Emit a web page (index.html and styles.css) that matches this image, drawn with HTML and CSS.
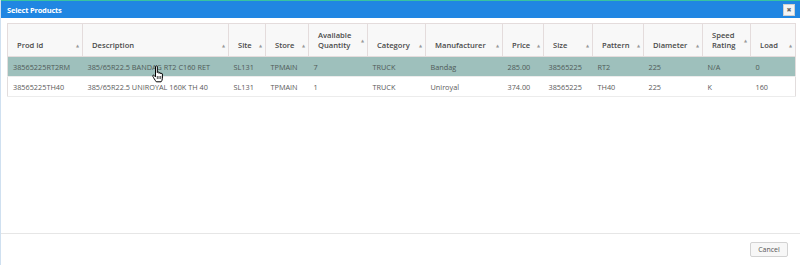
FILE: index.html
```html
<!DOCTYPE html>
<html lang="en">
<head>
    <meta charset="UTF-8">
    <title>Select Products</title>
    <link rel="stylesheet" href="styles.css">
</head>
<body>
    <div class="dialog">
        <div class="titlebar">
            <span class="title">Select Products</span>
            <span class="close">&#10006;</span>
        </div>
        <div class="content">
            <table class="grid">
                <colgroup>
                    <col style="width: 75px">
                    <col style="width: 146px">
                    <col style="width: 37px">
                    <col style="width: 43px">
                    <col style="width: 59px">
                    <col style="width: 58px">
                    <col style="width: 77px">
                    <col style="width: 41px">
                    <col style="width: 49px">
                    <col style="width: 51px">
                    <col style="width: 59px">
                    <col style="width: 48px">
                    <col style="width: 45px">
                </colgroup>
                <thead>
                    <tr>
                        <th><div class="th">Prod Id<span class="sort">&#9650;</span></div></th>
                        <th><div class="th">Description<span class="sort">&#9650;</span></div></th>
                        <th><div class="th">Site<span class="sort">&#9650;</span></div></th>
                        <th><div class="th">Store<span class="sort">&#9650;</span></div></th>
                        <th><div class="th">Available<br>Quantity<span class="sort">&#9650;</span></div></th>
                        <th><div class="th">Category<span class="sort">&#9650;</span></div></th>
                        <th><div class="th">Manufacturer<span class="sort">&#9650;</span></div></th>
                        <th><div class="th">Price<span class="sort">&#9650;</span></div></th>
                        <th><div class="th">Size<span class="sort">&#9650;</span></div></th>
                        <th><div class="th">Pattern<span class="sort">&#9650;</span></div></th>
                        <th><div class="th">Diameter<span class="sort">&#9650;</span></div></th>
                        <th><div class="th">Speed<br>Rating<span class="sort">&#9650;</span></div></th>
                        <th><div class="th">Load<span class="sort">&#9650;</span></div></th>
                    </tr>
                </thead>
                <tbody>
                    <tr class="selected">
                        <td>38565225RT2RM</td>
                        <td class="desc">385/65R22.5 BANDAG RT2 C160 RET
                            <svg class="cursor" width="13" height="18" viewBox="0 0 13 18">
                                <path d="M3.5 1.5c0-.8 1.8-.8 1.8 0v6c0-.8 1.7-.8 1.7 0v.8c0-.8 1.7-.8 1.7 0v.7c0-.8 1.7-.8 1.7 0v4.5c0 1.5-.8 2.5-1.3 3.3H4.3C3.3 15.5 1.2 12.3.8 11.2c-.3-.9.7-1.5 1.4-.7l1.3 1.4z" fill="#fff" stroke="#000" stroke-width="1" stroke-linejoin="round"/>
                                <path d="M5.3 11v3M7 11v3M8.7 11v3" stroke="#000" stroke-width=".7"/>
                            </svg>
                        </td>
                        <td>SL131</td>
                        <td>TPMAIN</td>
                        <td>7</td>
                        <td>TRUCK</td>
                        <td>Bandag</td>
                        <td>285.00</td>
                        <td>38565225</td>
                        <td>RT2</td>
                        <td>225</td>
                        <td>N/A</td>
                        <td>0</td>
                    </tr>
                    <tr>
                        <td>38565225TH40</td>
                        <td>385/65R22.5 UNIROYAL 160K TH 40</td>
                        <td>SL131</td>
                        <td>TPMAIN</td>
                        <td>1</td>
                        <td>TRUCK</td>
                        <td>Uniroyal</td>
                        <td>374.00</td>
                        <td>38565225</td>
                        <td>TH40</td>
                        <td>225</td>
                        <td>K</td>
                        <td>160</td>
                    </tr>
                </tbody>
            </table>
        </div>
        <div class="footer">
            <button class="btn">Cancel</button>
        </div>
    </div>
</body>
</html>
```

FILE: styles.css
```css
html, body {
    margin: 0;
    padding: 0;
    background: #fff;
}
body {
    font-family: "Open Sans", "DejaVu Sans", sans-serif;
    color: #555;
}
.dialog {
    width: 800px;
    height: 265px;
    display: flex;
    flex-direction: column;
    box-sizing: border-box;
    border-left: 1px solid #cfe0f0;
}
.titlebar {
    height: 17px;
    border-top: 1px solid #38c3a2;
    background: #2086e2;
    display: flex;
    align-items: center;
    justify-content: space-between;
    padding: 0 5px 0 6px;
}
.title {
    color: #fff;
    font-size: 7.5px;
    font-weight: 700;
    letter-spacing: -0.2px;
}
.close {
    width: 10px;
    height: 10px;
    background: #f4f4f4;
    border: 1px solid #d0d0d0;
    color: #666;
    font-size: 6px;
    line-height: 10px;
    text-align: center;
}
.content {
    flex: 1;
    padding: 5px 4px 0 6px;
}
.grid {
    width: 788px;
    border-collapse: collapse;
    table-layout: fixed;
    border: 1px solid #e2dddd;
}
.grid th {
    height: 29px;
    padding: 0 4px 3px 9px;
    background: #f8f8f8;
    border: 1px solid #e4dcdc;
    vertical-align: bottom;
    text-align: left;
    font-weight: 600;
    font-size: 7.6px;
    color: #4a4a4a;
    line-height: 10px;
}
.th {
    position: relative;
    padding: 2px 8px 3px 0;
    min-height: 10px;
    display: flex;
    flex-direction: column;
    justify-content: center;
}
.sort {
    position: absolute;
    right: -1px;
    top: 50%;
    margin-top: -5px;
    font-size: 4px;
    color: #999;
}
.grid td {
    height: 19px;
    padding: 0 3px 0 5px;
    font-size: 7.3px;
    color: #5a5a5a;
    border-bottom: 1px solid #ececec;
    white-space: nowrap;
    overflow: hidden;
}
.grid tr.selected td {
    background: #9ec0bc;
    color: #4f5a58;
}
.desc {
    position: relative;
    overflow: visible !important;
}
.cursor {
    position: absolute;
    left: 69px;
    top: 8px;
}
.footer {
    height: 32px;
    border-top: 1px solid #e6e6e6;
    display: flex;
    align-items: center;
    justify-content: flex-end;
    padding-right: 12px;
    box-sizing: border-box;
}
.btn {
    font-family: "Open Sans", "DejaVu Sans", sans-serif;
    font-size: 7px;
    color: #555;
    background: #f7f7f7;
    border: 1px solid #d2d2d2;
    border-radius: 2px;
    width: 38px;
    height: 15px;
    padding: 0;
}
```
